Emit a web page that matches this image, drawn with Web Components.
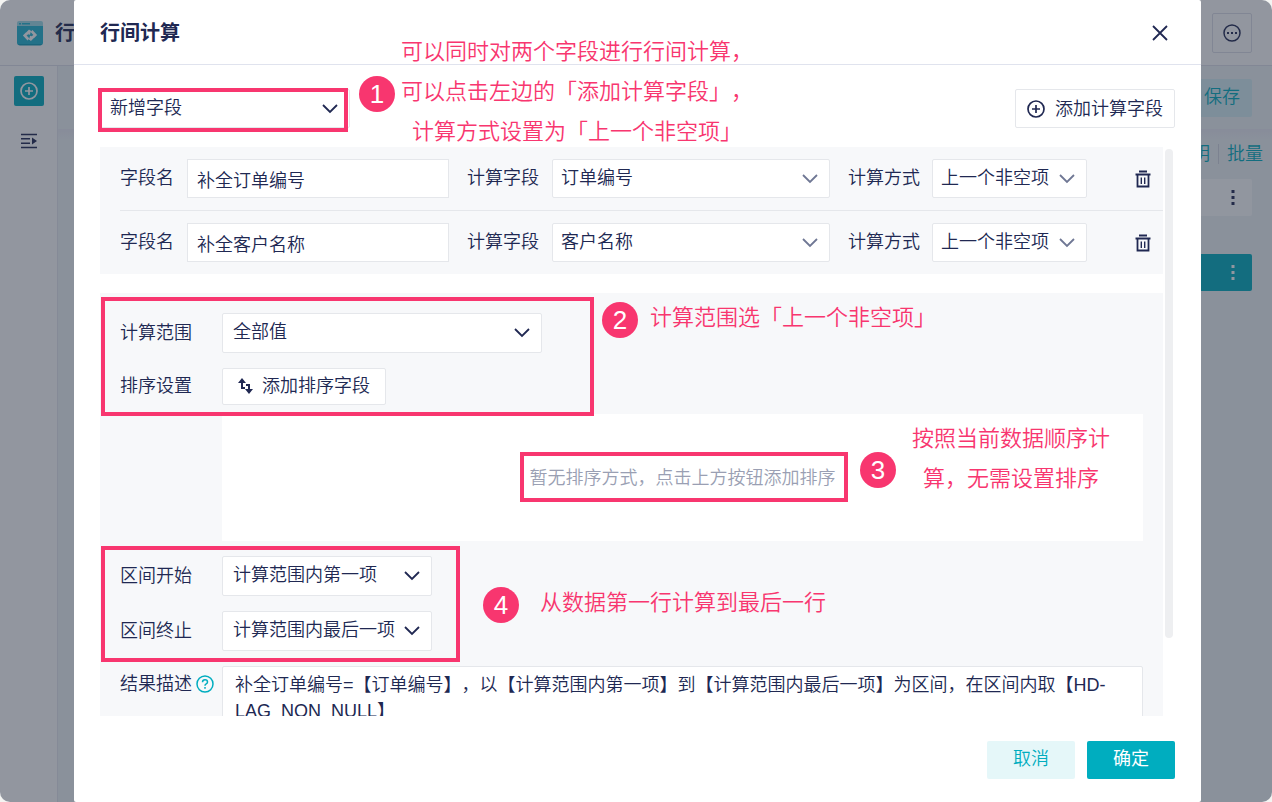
<!DOCTYPE html>
<html lang="zh-CN">
<head>
<meta charset="utf-8">
<meta name="viewport" content="width=device-width, initial-scale=1">
<title>行间计算</title>
<style>
  :root {
    --ink: #202852;
    --teal: #00adbf;
    --teal-soft: #e5f7f9;
    --line: #e5e7eb;
    --panel: #f7f8fa;
    --mark: #f8366f;
  }

  body {
    margin: 0;
    background: #f4f4f2;
    color: var(--ink);
    font: 350 18px/26px "Liberation Sans", "Noto Sans CJK SC", sans-serif;
    text-spacing-trim: space-all;
  }
</style>
</head>
<body>

<flow-app>
  <app-header slot="header"></app-header>
  <side-bar slot="side"></side-bar>
  <node-panel slot="main"></node-panel>

  <app-dialog slot="dialog" heading="行间计算">
    <dialog-toolbar slot="toolbar"></dialog-toolbar>

    <calc-list>
      <calc-row name="补全订单编号" field="订单编号"></calc-row>
      <calc-row name="补全客户名称" field="客户名称"></calc-row>
    </calc-list>
    <range-form></range-form>

    <mark-box slot="marks" style="left: 24px; top: 88px; width: 250px; height: 44px"></mark-box>
    <mark-box slot="marks" style="left: 27px; top: 297px; width: 493px; height: 119px"></mark-box>
    <mark-box slot="marks" style="left: 446px; top: 452px; width: 328px; height: 50px"></mark-box>
    <mark-box slot="marks" style="left: 27px; top: 546px; width: 359px; height: 116px"></mark-box>

    <mark-note slot="marks" number="1" style="left: 285px; top: 32px; --gap: 6px">可以同时对两个字段进行行间计算，<br>可以点击左边的「添加计算字段」，<br>计算方式设置为「上一个非空项」</mark-note>
    <mark-note slot="marks" number="2" style="left: 528px; top: 298px; --gap: 12px">计算范围选「上一个非空项」</mark-note>
    <mark-note slot="marks" number="3" style="left: 786px; top: 419px; --gap: 16px; --drop: 18px">按照当前数据顺序计<br>算，无需设置排序</mark-note>
    <mark-note slot="marks" number="4" style="left: 409px; top: 583px; --gap: 21px">从数据第一行计算到最后一行</mark-note>
  </app-dialog>
</flow-app>

<script>
(function () {

  // Shared by every shadow root
  const BASE = `
    *, *::before, *::after { box-sizing: border-box; }
    svg { display: block; flex: none; }
    button, input, select { font: inherit; color: inherit; margin: 0; }
    button { cursor: pointer; }
  `;

  const CHEVRON = `
    <svg class="chevron" width="16" height="16" viewBox="0 0 16 16" fill="none" stroke="currentColor" stroke-width="1.8" aria-hidden="true">
      <path d="M1 4l7 7 7-7"/>
    </svg>`;

  const CIRCLE_PLUS = `
    <svg width="18" height="18" viewBox="0 0 18 18" fill="none" stroke="currentColor" stroke-width="1.7" aria-hidden="true">
      <circle cx="9" cy="9" r="8"/><path d="M5 9h8M9 5v8"/>
    </svg>`;

  const DOTS = `
    <svg width="4" height="16" viewBox="0 0 4 16" fill="currentColor" aria-hidden="true">
      <path d="M.5 0h3v3h-3zM.5 6h3v3h-3zM.5 12h3v3h-3z"/>
    </svg>`;

  // select with its arrow stacked in one grid cell
  const SELECT_CSS = `
    .select { display: grid; min-width: 0; align-items: center; }
    .select select, .select .chevron { grid-area: 1 / 1; }
    .select select {
      appearance: none;
      width: 100%;
      height: var(--control, 40px);
      padding: 0 30px 2px var(--inset, 10px);
      border: 1px solid var(--line);
      border-radius: 2px;
      background: #fff;
    }
    .select .chevron { justify-self: end; margin-right: 12px; pointer-events: none; }
    .muted .chevron { color: #6f7794; }
  `;

  function select(id, text, cls = "") {
    return `<span class="select ${cls}"><select id="${id}"><option>${text}</option></select>${CHEVRON}</span>`;
  }

  class BaseElement extends HTMLElement {
    constructor() {
      super();
      this._shadowRoot = this.attachShadow({ mode: "open" });
    }

    connectedCallback() {
      this._shadowRoot.innerHTML = `<style>${BASE}${this.styles()}</style>${this.render()}`;
    }

    styles() { return ""; }
    render() { return "<slot></slot>"; }
  }

  // ===== PAGE FRAME =====
  class FlowApp extends BaseElement {
    styles() {
      return `
        :host {
          position: relative;
          display: grid;
          grid-template: auto 1fr / 58px 1fr;
          min-height: 100vh;
          overflow: hidden;
          border-radius: 10px;
          background: #eff5f7;
        }
        slot[name="header"] { display: block; grid-column: 1 / -1; }
        slot[name="side"], slot[name="main"] { display: grid; }
        .mask {
          position: absolute;
          inset: 0;
          background: rgba(37, 45, 63, 0.5);
        }
        .layer {
          position: absolute;
          inset: 0 71px 0 74px;
          display: grid;
        }
      `;
    }

    render() {
      return `
        <slot name="header"></slot>
        <slot name="side"></slot>
        <slot name="main"></slot>
        <div class="mask"></div>
        <div class="layer"><slot name="dialog"></slot></div>
      `;
    }
  }

  class AppHeader extends BaseElement {
    styles() {
      return `
        :host {
          box-sizing: border-box;
          display: flex;
          align-items: center;
          gap: 11px;
          height: 66px;
          padding: 0 20px 0 16px;
          border-bottom: 1px solid #dfe1ea;
          background: #fff;
        }
        b { font-size: 20px; font-weight: 700; }
        button {
          display: grid;
          place-items: center;
          width: 40px;
          height: 40px;
          margin-left: auto;
          padding: 0;
          border: 1px solid #dcdfe8;
          border-radius: 2px;
          background: none;
        }
      `;
    }

    render() {
      return `
        <svg width="28" height="28" viewBox="0 0 28 28" aria-hidden="true">
          <path fill="#9fdde9" d="M1 4q0-2 2-2h22q2 0 2 2v4H1z"/>
          <path fill="#20b4d0" d="M3 4h2v1.500H3zM6 4h8v1.500H6z"/>
          <path fill="#20b4d0" d="M1 7h26v17q0 2-2 2H3q-2 0-2-2z"/>
          <path fill="#0f9cb8" d="M2 25h24q-.5 1.500-2 1.500H4q-1.500 0-2-1.500z"/>
          <g fill="none" stroke="#fff" stroke-width="2.600">
            <path d="M9 16.500l5-5.200M15.500 12l3.800 4-2 2M19 16l-5 5.200M12.500 20.500l-3.800-4 2-2"/>
            <path stroke-width="2" d="M14 11.500l-1 4M14 21l1-4"/>
          </g>
        </svg>
        <b>行</b>
        <button aria-label="更多">
          <svg width="18" height="18" viewBox="0 0 18 18" fill="none" stroke="currentColor" stroke-width="1.5" aria-hidden="true">
            <circle cx="9" cy="9" r="8"/>
            <path stroke-width="2" d="M4 9h2M8 9h2M12 9h2"/>
          </svg>
        </button>
      `;
    }
  }

  class SideBar extends BaseElement {
    styles() {
      return `
        :host {
          display: flex;
          flex-direction: column;
          align-items: center;
          gap: 20px;
          padding-top: 10px;
          border-right: 1px solid #e4e7ee;
          background: #fff;
        }
        button {
          display: grid;
          place-items: center;
          width: 30px;
          height: 30px;
          padding: 0;
          border: 0;
          border-radius: 2px;
          background: none;
        }
        .add { background: var(--teal); color: #fff; }
      `;
    }

    render() {
      return `
        <button class="add" aria-label="新增">${CIRCLE_PLUS}</button>
        <button aria-label="展开">
          <svg width="16" height="16" viewBox="0 0 16 16" fill="none" stroke="currentColor" stroke-width="1.6" aria-hidden="true">
            <path d="M0 1.500h16M0 5.800h9M0 10.200h9M0 14.500h16"/>
            <path fill="currentColor" stroke="none" d="M11 4.500l5 3.500-5 3.500z"/>
          </svg>
        </button>
      `;
    }
  }

  class NodePanel extends BaseElement {
    styles() {
      return `
        :host { display: block; }
        .bar { display: flex; justify-content: flex-end; padding: 13px 20px 12px; }
        .save {
          height: 38px;
          padding: 0 12px 3px;
          border: 0;
          border-radius: 2px;
          background: #d5eff4;
          color: var(--teal);
        }
        .links {
          display: flex;
          justify-content: flex-end;
          align-items: center;
          gap: 8px;
          padding: 12px 9px;
          background: linear-gradient(#eaebf4, transparent 12px);
        }
        a { color: var(--teal); text-decoration: none; }
        .links i { width: 1px; height: 20px; background: #d2d6e0; }
        .nodes {
          display: flex;
          flex-direction: column;
          gap: 38px;
          padding: 0 20px 0 40px;
        }
        .node {
          display: flex;
          justify-content: flex-end;
          align-items: center;
          height: 37px;
          padding-right: 17px;
          border-radius: 2px;
          background: #fdfeff;
        }
        .node.active { background: var(--teal); color: #fff; }
      `;
    }

    render() {
      return `
        <div class="bar"><button class="save">保存</button></div>
        <div class="links"><a href="#help">明</a><i></i><a href="#batch">批量</a></div>
        <div class="nodes">
          <div class="node">${DOTS}</div>
          <div class="node active">${DOTS}</div>
        </div>
      `;
    }
  }

  // ===== DIALOG =====
  class AppDialog extends BaseElement {
    styles() {
      return `
        :host {
          position: relative;
          display: flex;
          flex-direction: column;
          min-width: 0;
          min-height: 0;
          background: #fff;
          border-radius: 2px;
        }
        header {
          display: flex;
          align-items: center;
          justify-content: space-between;
          height: 65px;
          padding: 2px 32px 0 26px;
          border-bottom: 1px solid #e0e3ee;
        }
        h1 { margin: 0; font-size: 20px; font-weight: 700; }
        .close { padding: 0; border: 0; background: none; }
        .body {
          display: flex;
          flex: 1;
          gap: 2px;
          min-height: 0;
          padding: 0 28px 0 26px;
        }
        .scroll { flex: 1; min-width: 0; overflow: hidden; }
        .thumb {
          flex: none;
          width: 8px;
          height: 86%;
          margin-top: 2px;
          border-radius: 4px;
          background: #eeeff1;
        }
        footer {
          display: flex;
          justify-content: flex-end;
          gap: 12px;
          padding: 25px 26px 23px;
        }
        footer button {
          width: 88px;
          height: 38px;
          padding: 0 0 2px;
          border: 0;
          border-radius: 2px;
          background: var(--teal-soft);
          color: var(--teal);
        }
        footer .primary { background: var(--teal); color: #fff; font-weight: 400; }
      `;
    }

    render() {
      return `
        <header>
          <h1>${this.getAttribute("heading")}</h1>
          <button class="close" aria-label="关闭">
            <svg width="18" height="18" viewBox="0 0 18 18" stroke="currentColor" stroke-width="1.8" aria-hidden="true">
              <path d="M2 2l14 14M16 2L2 16"/>
            </svg>
          </button>
        </header>
        <slot name="toolbar"></slot>
        <div class="body">
          <div class="scroll"><slot></slot></div>
          <div class="thumb"></div>
        </div>
        <footer>
          <button>取消</button>
          <button class="primary">确定</button>
        </footer>
        <slot name="marks"></slot>
      `;
    }
  }

  class DialogToolbar extends BaseElement {
    styles() {
      return `
        ${SELECT_CSS}
        :host {
          --control: 39px;
          --inset: 9px;
          display: flex;
          justify-content: space-between;
          padding: 24px 26px 19px;
        }
        .select { width: 250px; }
        button {
          display: flex;
          align-items: center;
          gap: 10px;
          height: 39px;
          padding: 0 11px;
          border: 1px solid var(--line);
          border-radius: 2px;
          background: #fff;
        }
      `;
    }

    render() {
      return `
        <span class="select">
          <select aria-label="字段类型"><option>新增字段</option></select>${CHEVRON}
        </span>
        <button>${CIRCLE_PLUS}添加计算字段</button>
      `;
    }
  }

  // ===== CALCULATED FIELDS =====
  class CalcList extends BaseElement {
    styles() {
      return `
        :host {
          display: block;
          margin-bottom: 19px;
          padding-left: 20px;
          background: var(--panel);
        }
        ::slotted(calc-row:not(:first-child)) { border-top: 1px solid var(--line); }
      `;
    }
  }

  class CalcRow extends BaseElement {
    styles() {
      return `
        ${SELECT_CSS}
        :host {
          --control: 39px;
          --inset: 8px;
          display: grid;
          grid-template-columns: 67px minmax(0, 262fr) 103px minmax(0, 278fr) 102px 155px 76px;
          align-items: center;
          padding: 12px 0;
        }
        input {
          width: 100%;
          height: 39px;
          padding: 0 9px;
          border: 1px solid var(--line);
          background: #fff;
        }
        label { padding-bottom: 1px; }
        .mid { padding-left: 18px; }
        button {
          justify-self: end;
          margin-right: 11px;
          padding: 0;
          border: 0;
          background: none;
        }
      `;
    }

    render() {
      return `
        <label for="name">字段名</label>
        <input id="name" type="text" value="${this.getAttribute("name")}">
        <label class="mid" for="field">计算字段</label>
        ${select("field", this.getAttribute("field"), "muted")}
        <label class="mid" for="method">计算方式</label>
        ${select("method", "上一个非空项", "muted")}
        <button aria-label="删除">
          <svg width="18" height="18" viewBox="0 0 18 18" fill="none" stroke="currentColor" stroke-width="1.8" aria-hidden="true">
            <path d="M5 1.500h8M1.500 4.500h15M3.500 5v11.500h11V5"/>
            <path stroke-width="1.400" d="M7.300 7.500v6.500M10.700 7.500v6.500"/>
          </svg>
        </button>
      `;
    }
  }

  // ===== RANGE SETTINGS =====
  class RangeForm extends BaseElement {
    styles() {
      return `
        ${SELECT_CSS}
        :host {
          display: grid;
          grid-template-columns: 102px minmax(0, 1fr);
          row-gap: 15px;
          padding: 20px;
          background: var(--panel);
        }
        label { padding-top: 7px; }
        .wide { max-width: 320px; }
        .short { max-width: 210px; }
        .sort { display: grid; gap: 9px; }
        .sort button {
          display: flex;
          align-items: center;
          justify-self: start;
          gap: 8px;
          height: 37px;
          padding: 0 15px 1px 14px;
          border: 1px solid var(--line);
          border-radius: 2px;
          background: #fff;
        }
        .empty {
          display: grid;
          place-items: center;
          height: 127px;
          background: #fff;
          color: #9a9fb3;
        }
        .label { display: flex; gap: 4px; padding-top: 5px; white-space: nowrap; }
        .label svg { margin-top: 4px; color: var(--teal); }
        .result {
          height: 92px;
          margin: 0;
          padding: 5px 12px;
          border: 1px solid var(--line);
          border-radius: 2px;
          background: #fff;
        }
      `;
    }

    render() {
      return `
        <label for="range">计算范围</label>
        ${select("range", "全部值", "wide")}
        <span class="label">排序设置</span>
        <div class="sort">
          <button>
            <svg width="17" height="16" viewBox="0 0 17 16" fill="none" stroke="currentColor" stroke-width="2" aria-hidden="true">
              <path d="M5 4v6M12 13V7"/>
              <path fill="currentColor" stroke="none" d="M5 0l4 5H1zM12 16l-4-5h8zM4 9h4v2H4zM9 6h4v2H9z"/>
            </svg>添加排序字段</button>
          <div class="empty">暂无排序方式，点击上方按钮添加排序</div>
        </div>
        <label for="start">区间开始</label>
        ${select("start", "计算范围内第一项", "short")}
        <label for="end">区间终止</label>
        ${select("end", "计算范围内最后一项", "short")}
        <span class="label">结果描述
          <svg width="18" height="18" viewBox="0 0 18 18" fill="none" stroke="currentColor" stroke-width="1.5" aria-hidden="true">
            <circle cx="9" cy="9" r="8"/>
            <path d="M6.500 7.200q0-2.500 2.500-2.500t2.500 2.200q0 1.200-1.300 2-1.200.7-1.200 1.900"/>
            <path d="M9 12v1.700"/>
          </svg>
        </span>
        <p class="result">补全订单编号=【订单编号】，以【计算范围内第一项】到【计算范围内最后一项】为区间，在区间内取【HD-LAG_NON_NULL】</p>
      `;
    }
  }

  // ===== GUIDE MARKS =====
  class MarkBox extends BaseElement {
    styles() {
      return `
        :host {
          position: absolute;
          box-sizing: border-box;
          border: 4px solid var(--mark);
          pointer-events: none;
        }
      `;
    }
  }

  class MarkNote extends BaseElement {
    styles() {
      return `
        :host {
          position: absolute;
          display: flex;
          align-items: center;
          gap: var(--gap);
          color: var(--mark);
          font-size: 22px;
          line-height: 40px;
          text-align: center;
          white-space: nowrap;
          pointer-events: none;
        }
        .number {
          width: 36px;
          height: 36px;
          margin-top: var(--drop, 0);
          border-radius: 50%;
          background: var(--mark);
          color: #fff;
          font: 26px/36px "Liberation Sans", sans-serif;
        }
        .text { padding-bottom: 4px; }
      `;
    }

    render() {
      return `<span class="number">${this.getAttribute("number")}</span><span class="text"><slot></slot></span>`;
    }
  }

  customElements.define("flow-app", FlowApp);
  customElements.define("app-header", AppHeader);
  customElements.define("side-bar", SideBar);
  customElements.define("node-panel", NodePanel);
  customElements.define("app-dialog", AppDialog);
  customElements.define("dialog-toolbar", DialogToolbar);
  customElements.define("calc-list", CalcList);
  customElements.define("calc-row", CalcRow);
  customElements.define("range-form", RangeForm);
  customElements.define("mark-box", MarkBox);
  customElements.define("mark-note", MarkNote);

})();
</script>
</body>
</html>
